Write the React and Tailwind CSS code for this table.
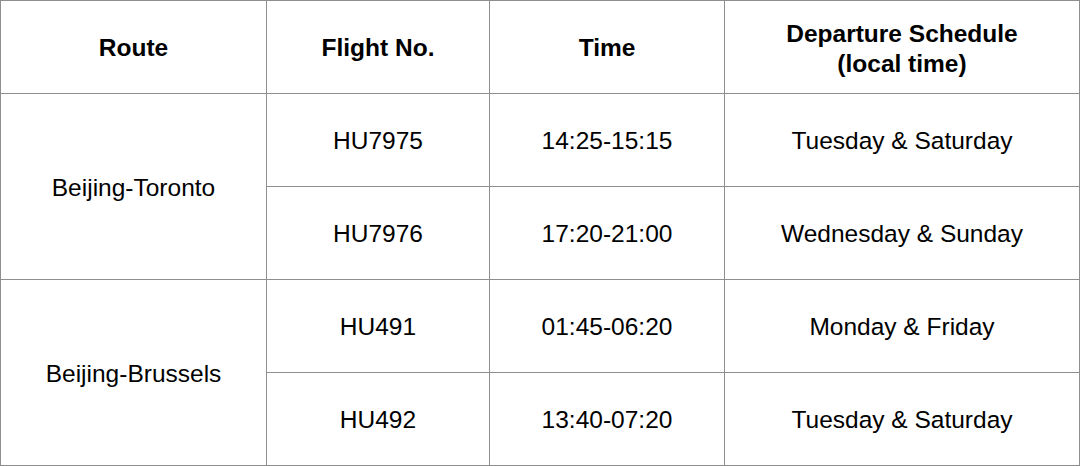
import React from "react";

const rows = [
  { route: "Beijing-Toronto", flights: [
    ["HU7975", "14:25-15:15", "Tuesday & Saturday"],
    ["HU7976", "17:20-21:00", "Wednesday & Sunday"],
  ]},
  { route: "Beijing-Brussels", flights: [
    ["HU491", "01:45-06:20", "Monday & Friday"],
    ["HU492", "13:40-07:20", "Tuesday & Saturday"],
  ]},
];

export default function App() {
  const cell = "bg-white flex items-center justify-center text-center pt-[3px]";
  return (
    <div
      className="w-[1080px] h-[466px] bg-[#8e8e8e] p-px text-black text-[24.5px]"
      style={{ fontFamily: '"Liberation Sans", Arial, sans-serif' }}
    >
      <div className="grid grid-cols-[265px_222px_234px_354px] grid-rows-[92px_92px_92px_92px_92px] gap-px h-full">
        <div className={`${cell} font-bold`}>Route</div>
        <div className={`${cell} font-bold`}>Flight No.</div>
        <div className={`${cell} font-bold`}>Time</div>
        <div className={`${cell} font-bold leading-[30px]`}>
          Departure Schedule
          <br />
          (local time)
        </div>
        {rows.map((r) => (
          <React.Fragment key={r.route}>
            <div className={`${cell} row-span-2`}>{r.route}</div>
            {r.flights[0].map((t, i) => (
              <div key={"a" + i} className={cell}>{t}</div>
            ))}
            {r.flights[1].map((t, i) => (
              <div key={"b" + i} className={cell}>{t}</div>
            ))}
          </React.Fragment>
        ))}
      </div>
    </div>
  );
}
